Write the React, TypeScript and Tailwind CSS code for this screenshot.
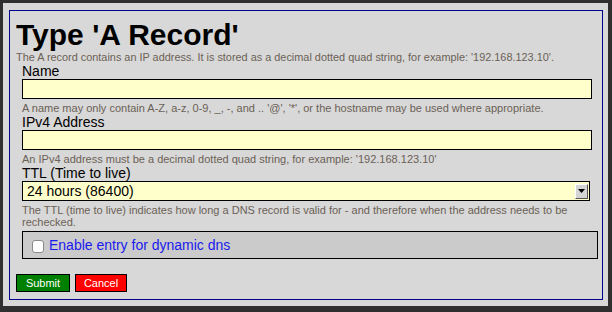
import React from 'react';

const hint = 'mt-[3px] text-[11px] leading-[12px] text-[#6b6156]';
const label = 'text-[14px] leading-[16px] text-black';

function Field({ name, help }: { name: string; help: string }) {
  return (
    <div>
      <div className={label}>{name}</div>
      <input
        type="text"
        className="block h-[20px] w-[570px] border border-black bg-[#ffffcc] outline-none"
      />
      <div className={hint}>{help}</div>
    </div>
  );
}

export default function App() {
  return (
    <div
      className="h-[312px] w-[612px] overflow-hidden bg-[#2f2f2f] pt-[3px] pl-[3px]"
      style={{ fontFamily: '"Liberation Sans", Arial, sans-serif' }}
    >
      <div className="h-[303px] w-[605px] bg-[#d8d8d8] pt-[7px] pl-[6px]">
        <div className="h-[290px] w-[594px] border border-[#00008b] pl-[6px]">
          <h1 className="pt-[9px] text-[30px] font-bold leading-[30px] text-black">
            Type 'A Record'
          </h1>
          <p className="mt-[1px] text-[10.9px] leading-[12px] text-[#6b6156]">
            The A record contains an IP address. It is stored as a decimal dotted quad
            string, for example: '192.168.123.10'.
          </p>

          <div className="pl-[6px]">
            <Field
              name="Name"
              help="A name may only contain A-Z, a-z, 0-9, _, -, and .. '@', '*', or the hostname may be used where appropriate."
            />
            <Field
              name="IPv4 Address"
              help="An IPv4 address must be a decimal dotted quad string, for example: '192.168.123.10'"
            />

            <div>
              <div className={label}>TTL (Time to live)</div>
              <div className="flex h-[20px] w-[568px] items-center justify-between border border-black bg-[#ffffcc] pl-[4px] pr-[1px]">
                <span className="text-[14px] leading-[16px] text-black">24 hours (86400)</span>
                <div className="flex h-[15px] w-[13px] items-center justify-center border border-t-white border-l-white border-r-[#555] border-b-[#555] bg-[#d4d4d4]">
                  <svg width="7" height="4" viewBox="0 0 7 4">
                    <path d="M0 0h7L3.5 4z" fill="#000" />
                  </svg>
                </div>
              </div>
              <div className={`${hint} w-[570px]`}>
                The TTL (time to live) indicates how long a DNS record is valid for - and
                therefore when the address needs to be rechecked.
              </div>
            </div>

            <div className="mt-[3px] flex h-[28px] w-[576px] items-center gap-[5px] border border-black bg-[#cbcbcb] pl-[9px]">
              <span className="mt-[2px] h-[13px] w-[12px] rounded-[3px] border border-[#8a8a8a] bg-white" />
              <span className="text-[14px] leading-[16px] text-[#1a1aee]">
                Enable entry for dynamic dns
              </span>
            </div>
          </div>

          <div className="mt-[15px] flex gap-[5px]">
            <button className="h-[18px] w-[54px] border border-black bg-[#008000] text-[11px] leading-[16px] text-white">
              Submit
            </button>
            <button className="h-[18px] w-[52px] border border-black bg-[#ff0000] text-[11px] leading-[16px] text-white">
              Cancel
            </button>
          </div>
        </div>
      </div>
    </div>
  );
}
